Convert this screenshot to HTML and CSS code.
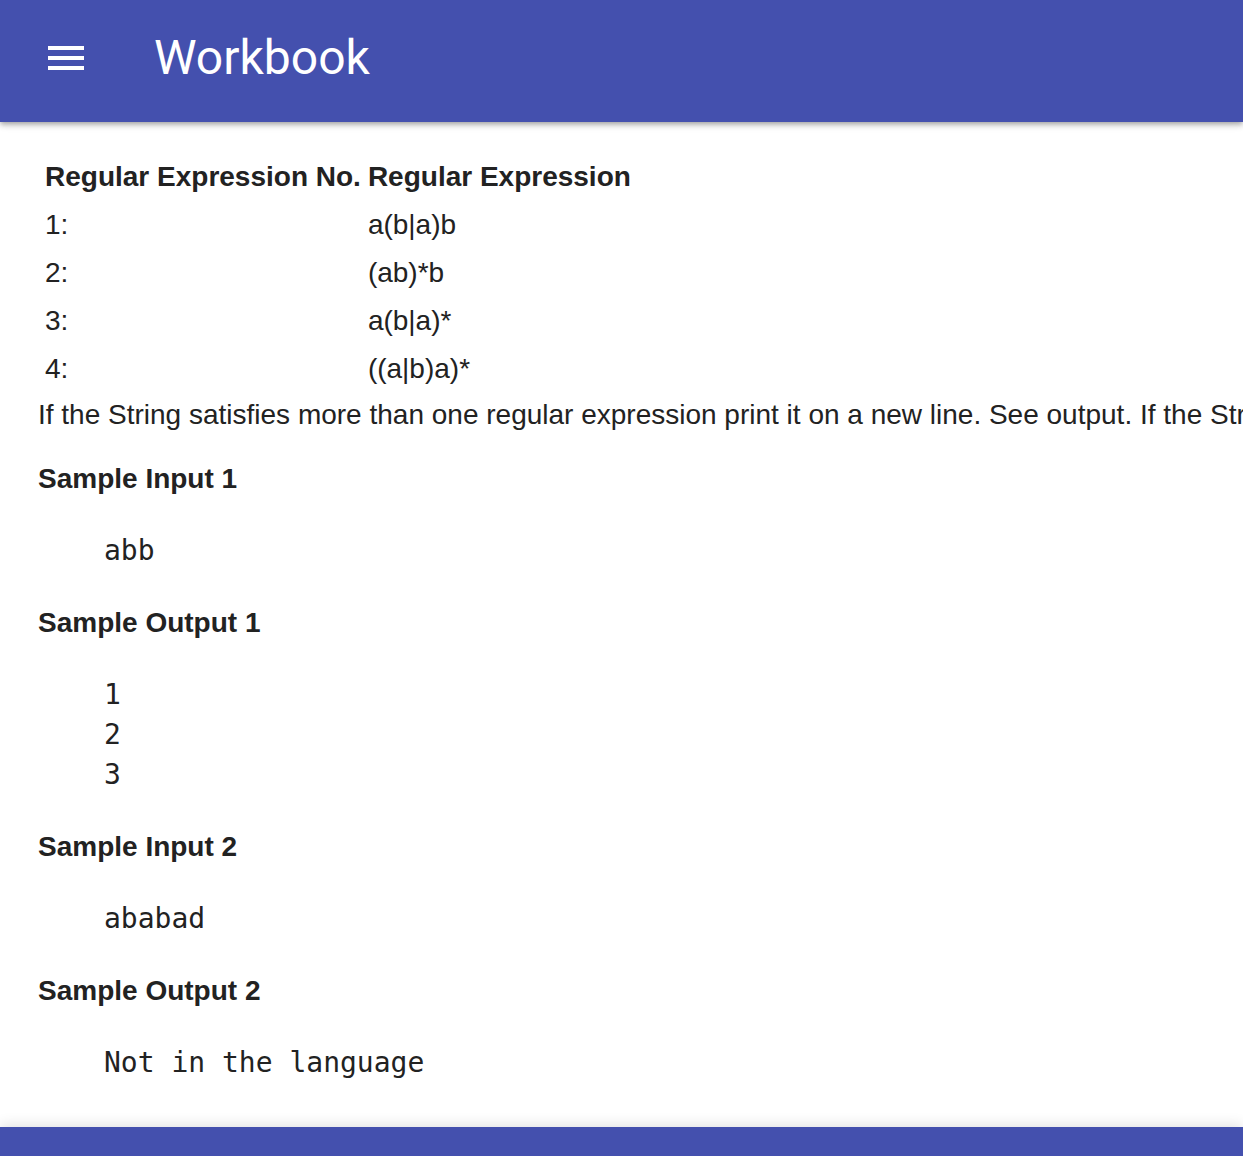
FILE: index.html
```html
<!DOCTYPE html>
<html lang="en">
<head>
<meta charset="utf-8">
<title>Workbook</title>
<link rel="stylesheet" href="styles.css">
</head>
<body>
<header class="app-bar">
  <span class="menu-btn" aria-label="menu">
    <svg width="48" height="48" viewBox="0 0 24 24"><path d="M3 18h18v-2H3v2zm0-5h18v-2H3v2zm0-7v2h18V6H3z" fill="#fff"/></svg>
  </span>
  <h1 class="app-title">Workbook</h1>
</header>
<main class="content">
  <table class="regex-table">
    <thead>
      <tr><th>Regular Expression No.</th><th>Regular Expression</th></tr>
    </thead>
    <tbody>
      <tr><td>1:</td><td>a(b|a)b</td></tr>
      <tr><td>2:</td><td>(ab)*b</td></tr>
      <tr><td>3:</td><td>a(b|a)*</td></tr>
      <tr><td>4:</td><td>((a|b)a)*</td></tr>
    </tbody>
  </table>
  <p class="desc">If the String satisfies more than one regular expression print it on a new line. See output. If the String does not satisfy any regular expression print Not in the language.</p>
  <h4 class="sample-title">Sample Input 1</h4>
  <pre class="sample">abb</pre>
  <h4 class="sample-title">Sample Output 1</h4>
  <pre class="sample">1
2
3</pre>
  <h4 class="sample-title">Sample Input 2</h4>
  <pre class="sample">ababad</pre>
  <h4 class="sample-title">Sample Output 2</h4>
  <pre class="sample">Not in the language</pre>
</main>
<footer class="bottom-bar"></footer>
</body>
</html>
```

FILE: styles.css
```css
html, body {
  margin: 0;
  padding: 0;
}
body {
  min-height: 100vh;
  display: flex;
  flex-direction: column;
  background: #fff;
  color: #222;
  font-family: "Liberation Sans", Arial, sans-serif;
  font-size: 28px;
  overflow: hidden;
}
.app-bar {
  height: 122px;
  box-sizing: border-box;
  padding: 0 0 6px 42px;
  display: flex;
  align-items: center;
  background: #4450ae;
  box-shadow: 0 2px 4px -1px rgba(0,0,0,.2), 0 4px 5px 0 rgba(0,0,0,.14), 0 1px 10px 0 rgba(0,0,0,.12);
  position: relative;
  z-index: 2;
  flex-shrink: 0;
}
.menu-btn {
  display: flex;
  width: 48px;
  height: 48px;
}
.app-title {
  margin: 0 0 0 64px;
  font-family: Roboto, "Liberation Sans", sans-serif;
  font-weight: 400;
  font-size: 48px;
  line-height: 48px;
  color: #fff;
}
.content {
  flex: 1;
  padding: 29px 0 0 38px;
  overflow: hidden;
}
.regex-table {
  border-collapse: separate;
  border-spacing: 3px 4px;
  margin: 0 0 0 2px;
}
.regex-table th,
.regex-table td {
  padding: 6px 2px;
  line-height: 32px;
  text-align: left;
  white-space: nowrap;
}
.regex-table th {
  font-weight: 700;
}
.desc {
  margin: 4px 0 32px;
  line-height: 32px;
  white-space: nowrap;
}
.sample-title {
  margin: 0;
  font-size: 28px;
  line-height: 32px;
  font-weight: 700;
}
.sample {
  margin: 36px 0 36px 66px;
  font-family: "DejaVu Sans Mono", "Liberation Mono", monospace;
  font-size: 28px;
  line-height: 40px;
}
.bottom-bar {
  height: 29px;
  flex-shrink: 0;
  background: #4450ae;
  box-shadow: 0 -2px 14px rgba(0,0,0,.12);
}
```
